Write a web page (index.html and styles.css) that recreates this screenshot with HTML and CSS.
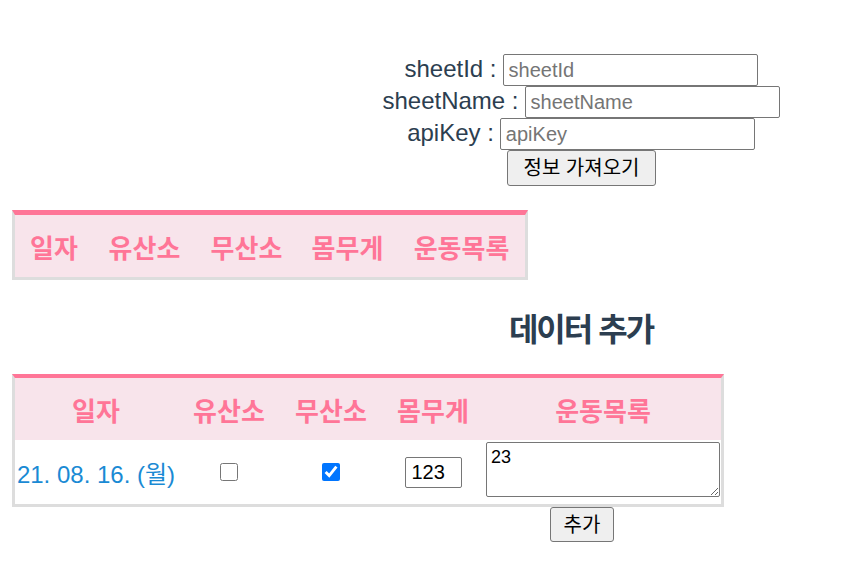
FILE: index.html
```html
<!DOCTYPE html>
<html lang="ko">
<head>
<meta charset="utf-8">
<title>운동 기록</title>
<link rel="stylesheet" href="styles.css">
</head>
<body>
<div class="page">
  <div class="center form">
    <div class="field"><label class="label">sheetId :</label><input class="text-input" placeholder="sheetId"></div>
    <div class="field"><label class="label">sheetName :</label><input class="text-input" placeholder="sheetName"></div>
    <div class="field"><label class="label">apiKey :</label><input class="text-input" placeholder="apiKey"></div>
    <button class="btn btn-fetch">정보 가져오기</button>
  </div>

  <table class="sheet sheet-list">
    <colgroup>
      <col class="w78"><col class="w103"><col class="w101"><col class="w101"><col class="w127">
    </colgroup>
    <thead>
      <tr><th>일자</th><th>유산소</th><th>무산소</th><th>몸무게</th><th>운동목록</th></tr>
    </thead>
  </table>

  <h2 class="center title">데이터 추가</h2>

  <table class="sheet sheet-add">
    <colgroup>
      <col class="w162"><col class="w104"><col class="w100"><col class="w104"><col class="w236">
    </colgroup>
    <thead>
      <tr><th>일자</th><th>유산소</th><th>무산소</th><th>몸무게</th><th>운동목록</th></tr>
    </thead>
    <tbody>
      <tr>
        <td class="date">21. 08. 16. (월)</td>
        <td><input type="checkbox" class="check"></td>
        <td><input type="checkbox" class="check" checked></td>
        <td><input class="num-input" value="123"></td>
        <td class="memo-cell"><textarea class="memo">23</textarea></td>
      </tr>
    </tbody>
  </table>

  <div class="center">
    <button class="btn btn-add">추가</button>
  </div>
</div>
</body>
</html>
```

FILE: styles.css
```css
html, body {
  margin: 0;
  padding: 0;
  background: #ffffff;
}

.page {
  padding: 54px 0 0 12px;
  font-family: "Liberation Sans", "Noto Sans CJK KR", sans-serif;
  color: #2c3e50;
}

.center {
  width: 528px;
  margin-left: 305px;
  text-align: center;
}

.form {
  display: flex;
  flex-direction: column;
  align-items: center;
}

.field {
  display: flex;
  align-items: baseline;
  justify-content: center;
  gap: 6px;
  height: 32px;
}

.label {
  font-size: 24px;
  color: #2c3e50;
}

.text-input {
  box-sizing: border-box;
  width: 255px;
  height: 32px;
  padding: 0 5px;
  font-family: "Liberation Sans", sans-serif;
  font-size: 20px;
  color: #000;
  border: 1px solid #767676;
  border-radius: 2px;
  outline: none;
}

.text-input::placeholder {
  color: #757575;
}

.btn {
  box-sizing: border-box;
  font-family: "Liberation Sans", "Noto Sans CJK KR", sans-serif;
  font-size: 20px;
  color: #000;
  background: #efefef;
  border: 1px solid #767676;
  border-radius: 3px;
  padding: 0;
  line-height: 1;
}

.btn-fetch {
  width: 149px;
  height: 36px;
  margin-left: 1px;
}

.btn-add {
  width: 64px;
  height: 35px;
  margin-left: 2px;
  vertical-align: top;
}

.sheet {
  border-collapse: separate;
  border-spacing: 0;
  table-layout: fixed;
  border-left: 3px solid #dddddd;
  border-right: 3px solid #dddddd;
  border-bottom: 3px solid #dddddd;
  font-family: "Liberation Sans", "Noto Sans CJK KR", sans-serif;
}

.sheet th {
  padding: 0;
  height: 62px;
  background: #f8e4eb;
  color: #ff7597;
  font-size: 26px;
  font-weight: bold;
  text-align: center;
  vertical-align: middle;
  white-space: nowrap;
}

.sheet-list {
  margin-top: 24px;
  border-top: 5px solid #ff7597;
}

.sheet-add {
  border-top: 4px solid #ff7597;
}

.w78 { width: 78px; }
.w103 { width: 103px; }
.w101 { width: 101px; }
.w127 { width: 127px; }
.w162 { width: 162px; }
.w104 { width: 104px; }
.w100 { width: 100px; }
.w236 { width: 236px; }

.sheet td {
  padding: 0;
  height: 64px;
  text-align: center;
  vertical-align: middle;
  background: #ffffff;
}

.sheet td.date {
  font-size: 24px;
  color: #1a8ad4;
  white-space: nowrap;
}

.check {
  width: 18px;
  height: 18px;
  margin: 0;
  vertical-align: middle;
}

.num-input {
  box-sizing: border-box;
  width: 57px;
  height: 31px;
  padding: 0 6px;
  font-family: "Liberation Sans", sans-serif;
  font-size: 20px;
  color: #000;
  border: 1px solid #767676;
  border-radius: 2px;
  vertical-align: middle;
}

.memo-cell {
  text-align: left;
}

.memo {
  display: block;
  box-sizing: border-box;
  width: 234px;
  height: 55px;
  margin: 0 0 5px 1px;
  padding: 4px 4px;
  font-family: "Liberation Sans", sans-serif;
  font-size: 18px;
  color: #000;
  border: 1px solid #767676;
  border-radius: 2px;
}

.title {
  margin: 27px 0 27px 305px;
  height: 40px;
  line-height: 40px;
  font-size: 32px;
  font-weight: bold;
  letter-spacing: -2px;
  color: #2c3e50;
  font-family: "Noto Sans CJK KR", sans-serif;
}
```
